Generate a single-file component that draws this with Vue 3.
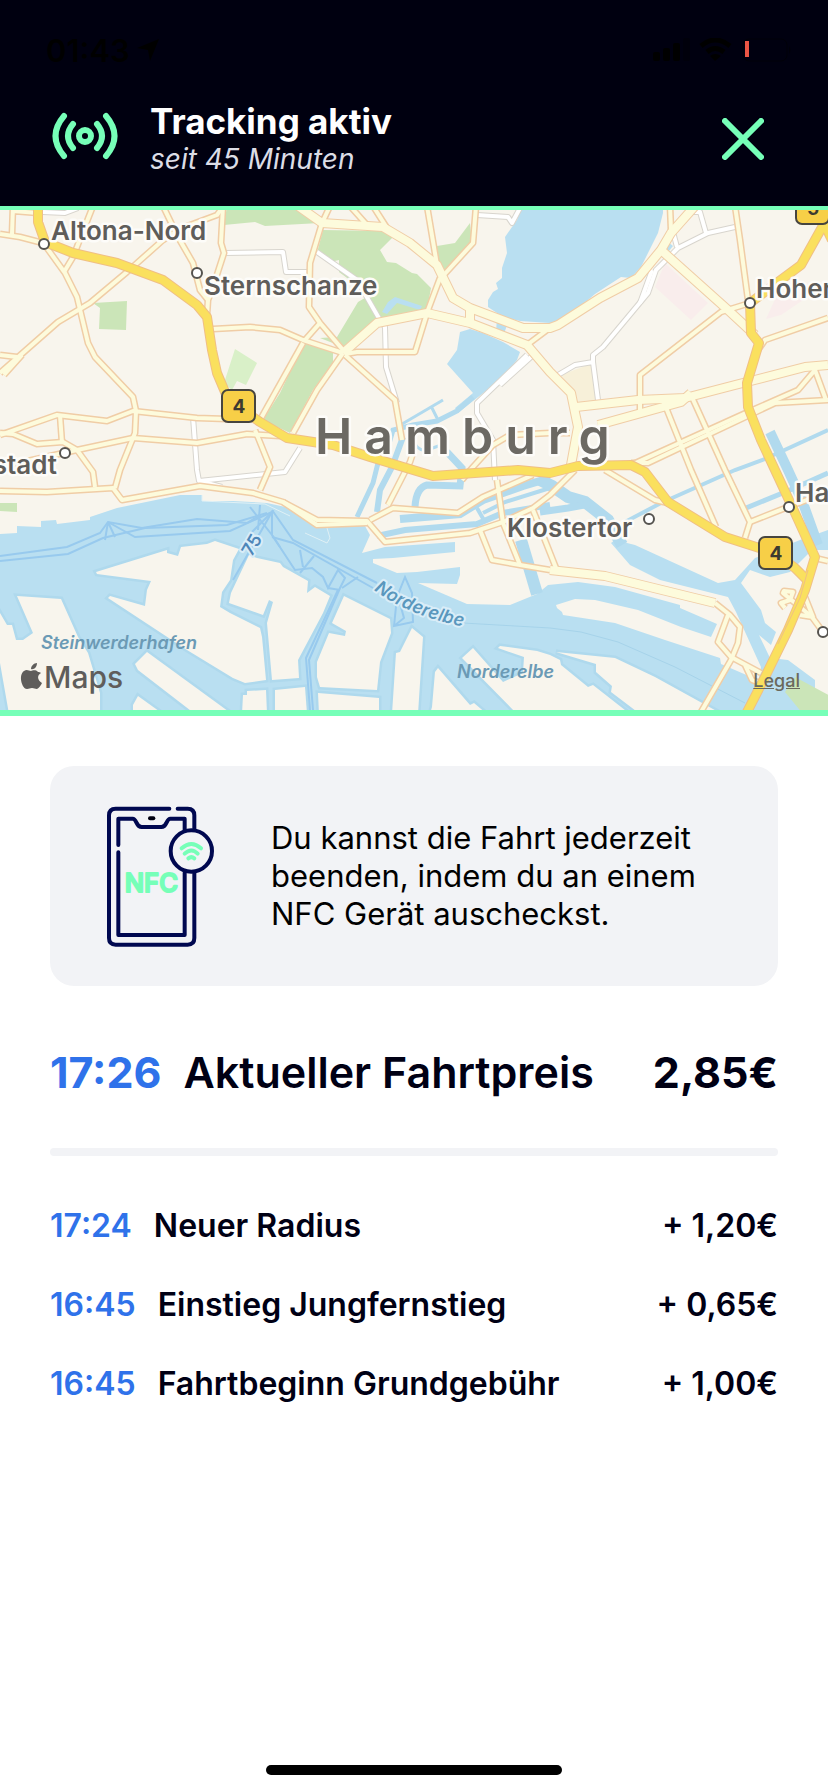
<script setup>
const entries = [
  { time: '17:24', label: 'Neuer Radius', amount: '+ 1,20€' },
  { time: '16:45', label: 'Einstieg Jungfernstieg', amount: '+ 0,65€' },
  { time: '16:45', label: 'Fahrtbeginn Grundgebühr', amount: '+ 1,00€' },
]

const water = [
  'M523 204L517 220 512 227 505 237 507 253 502 268 502 278 496 283 498 289 493 292 488 300 488 307 503 317 520 321 550 323 558 322 588 300 595 294 621 277 631 278 641 267 648 253 658 233 663 213 663 204Z',
  'M460 332L470 329 483 333 503 342 520 352 517 360 500 380 473 401 458 413 455 408 473 393 447 364 457 350Z',
  'M497 318L508 322 504 334 496 332Z',
  'M382 312L388 302 395 297 422 306 420 310 397 303 387 314Z',
  'M665 247L668 242 673 246 669 251Z',
  // Elbe and harbour basin
  'M0 534L17 533 17 526 41 527 41 521 56 520 57 524 90 520 90 517 117 508 180 495 202 495 202 501 233 501 267 503 290 508 313 525 365 526 370 535 362 553 385 547 455 542 455 552 393 558 373 559 373 563 397 573 417 572 460 567 460 575 457 584 418 583 467 604 510 605 537 594 548 585 578 582 615 587 680 605 680 608 717 624 711 637 681 627 638 610 595 600 575 599 556 605 557 608 562 612 563 615 615 623 665 640 720 658 721 664 758 680 785 690 803 712 0 712Z',
  'M611 543L615 540 635 545 718 583 735 580 755 558 800 540 828 530 828 550 812 550 790 572 770 577 750 570 741 583 761 610 765 623 776 632 771 645 759 635 770 658 788 660 815 680 815 688 785 700 758 682 761 667 736 612 728 597 660 580 630 565Z',
]

const canals = [
  { d: 'M473 397L457 411 437 421 413 425 393 430 388 447 378 463 373 483 357 517', w: 5 },
  { d: 'M443 400L397 427 M432 408L438 420', w: 3 },
  { d: 'M403 437L392 467 380 490 377 512', w: 6 },
  { d: 'M412 438Q417 452 427 450L447 443', w: 3 },
  { d: 'M447 452L462 468 460 486 427 485Q416 488 415 507', w: 7 },
  { d: 'M400 519L460 514 483 500 523 486 550 478', w: 8 },
  { d: 'M377 536L405 530 477 524 503 513 550 505', w: 6 },
  { d: 'M483 513L505 502 550 488 M477 508L485 522', w: 4 },
  { d: 'M540 480L552 486 568 497 585 502 608 520 622 545', w: 12 },
  { d: 'M540 512L568 508 590 504', w: 7 },
  { d: 'M521 540L537 594', w: 12 },
  { d: 'M625 522L661 503 735 470 765 459 828 430', w: 4 },
  { d: 'M746 508L790 490 828 473', w: 5 },
  { d: 'M770 432L788 470 803 503 818 545', w: 10 },
]

const land = [
  'M96 572L167 550 167 553 178 556 181 547 207 544 215 541 239 549 233 560 230 580 222 592 220 607 230 613 260 628 262 637 266 680 245 683 233 678 187 650 108 598 110 596 145 606 147 590 151 581 97 574Z',
  'M17 596L61 599 78 637 88 653 100 693 100 714 9 714 0 663 0 613 7 625 12 625 16 640 23 640 33 633Z',
  'M147 652L232 714 195 714 138 670 135 664Z',
  'M138 696L163 714 133 714 133 705Z',
  'M243 695L247 695 247 691 266 690 267 714 242 714Z',
  'M249 555L257 558 280 563 283 567 308 581 307 593 315 587 330 596 323 613 298 660 299 678 272 680 267 623 273 602 269 600 263 615 229 603 231 593Z',
  'M275 690L305 687 307 714 275 714Z',
  'M344 596L390 619 391 633 380 662 377 690 320 687 317 677 317 662 329 633 345 636 346 631 332 623Z',
  'M318 693L379 698 379 714 319 714Z',
  'M412 628L423 637 418 714 392 714 396 653 400 652Z',
  'M438 668L470 705 474 703 487 714 430 714 432 707 435 672Z',
  'M462 658L473 648 503 682 523 673 524 657 498 648 500 646 537 651 550 655 560 660 561 665 588 687 593 685 630 714 517 714Z',
  'M556 652L615 658 655 677 722 714 640 714 611 692 612 686 596 672 596 664Z',
]

const areas = [
  { c: '#cbe5b8', d: 'M93 303L127 301 126 330 99 329 100 308Z M227 206L224 225 255 222 265 226 320 223 298 206Z M323 230L383 231 393 237 380 250 387 262 396 263 412 273 417 274 431 288 427 310 380 318 343 347 320 338 337 337 358 302 370 295 339 272 339 260 330 262 317 253Z M305 340L333 350 333 363 313 390 290 433 263 420 280 393Z M437 246L455 243 470 223 472 243 443 275 437 263Z M0 503L17 503 17 512 0 511Z' },
  { c: '#d9f0c8', d: 'M235 349L257 363 246 385 237 381 232 390 224 383Z' },
  { c: '#f9edec', d: 'M665 263L708 303 691 320 655 287Z M776 297L816 280 818 290 781 315 766 319Z' },
  { c: '#f7f0d9', d: 'M561 375L593 363 596 402 576 403 571 390Z' },
]

const ferries = [
  'M0 556L67 547 100 533 108 522 142 528 197 519 247 523 260 515',
  'M0 561L68 554 103 538 145 528 227 525 267 513',
  'M108 522L135 537 230 531 272 512 233 580 M108 522L105 540 M108 522L115 537',
  'M250 507L272 535 M260 505L258 530 M272 512L252 532 M272 512V535L280 547',
  'M272 510L293 540 377 583 M272 537L293 543 373 588',
  'M272 535L295 570 312 568 323 577 328 588 338 570 345 578 340 588 309 660 313 710',
  'M328 588L340 590 M338 590L306 658 310 710 M342 588L358 577 M300 550L303 567 M314 556L300 573',
  'M405 577L397 597 394 626 413 622 412 593Z M394 626L404 618 399 600',
]

const whiteRoads = [
  'M43 212L65 213 78 208', 'M225 253L283 252 286 272 310 272',
  'M317 252L357 280 380 320 385 327 386 367 397 403',
  'M193 417L197 470 199 481 285 472 300 448 M199 481L222 487',
  'M477 215L508 217 512 223 520 208',
  'M527 355L477 403 477 413 493 440 495 480 M531 357L500 385',
  'M558 375L575 365 593 362 598 400 M593 362V355L603 347 648 293 656 270 678 248 708 233 735 227',
  'M640 303L652 270 M691 212L700 212 706 233 M673 232L677 247',
]

const roads = [
  'M0 234L20 237 43 243', 'M13 206L12 234 M13 211L38 213', 'M93 206L73 257 64 272',
  'M47 248L65 273 77 297 88 343 95 357 133 397 136 411 135 433 120 470 115 488',
  'M0 373L58 322 90 303 127 272 163 240 182 228 217 215 222 208 M4 375L22 355',
  'M0 355L17 357', 'M163 206L178 237 193 263 200 290 208 300',
  'M223 206L221 243 224 253 213 287 208 300 207 315',
  'M213 329L250 327 280 330 303 340 343 353',
  'M0 435L57 415 107 421 133 411 197 418 227 419',
  'M0 433L13 434 37 444 63 442 77 450 93 472 95 487', 'M60 415L62 443',
  'M0 467L77 450 133 438 197 443 247 434 280 436',
  'M0 491L47 492 113 488 122 500 200 486 253 493 283 502 317 520 367 521 385 542 470 533 503 522 533 508 550 495 575 470',
  'M283 502L317 525 367 523', 'M255 430L270 467 260 490',
  'M303 343L260 420', 'M343 353L317 390 293 433',
  'M330 206L322 223 310 263 309 307 320 323 343 350 M320 323L305 340',
  'M350 206L367 225 M373 206L387 228', 'M440 278L428 310 415 352 357 352 345 354',
  'M427 206L437 265', 'M476 206L473 243 442 277', 'M345 355L395 400 402 440',
  'M527 345L547 330', 'M670 206L671 230', 'M735 206L740 240 748 300',
  'M750 303L721 312 640 375 640 410',
  'M828 318L765 340 758 350', 'M631 465L748 412 798 390 815 370 826 400', 'M828 400L775 403 648 463 631 463',
  'M663 400L691 470 716 527', 'M691 395L725 470 750 522 745 538', 'M750 522L788 507 828 492',
  'M605 470L655 500 668 503', 'M570 433L550 433 510 435 493 445 473 467 462 480',
  'M370 520L393 508 458 513 483 497 533 475', 'M413 453L410 462 388 505', 'M497 480L503 523 520 565',
  'M480 530L492 560 520 565 550 570', 'M533 510L556 568',
  'M715 603L730 615 740 627 738 643 731 660 701 712', 'M728 615L718 642 731 657 761 673 M745 665L752 680 765 685',
  'M823 632L812 617 783 593 784 591 793 592 790 600 781 603 785 608 M805 597L813 617 800 615', 'M815 558L828 561',
]

const mainRoads = [
  'M298 206L322 223 383 227 410 243 437 265 453 298 470 308 523 328 550 328 558 325 600 298 638 278 661 250 671 233 695 206',
  'M343 353L377 323 427 313 470 323 527 345 550 372 571 393 578 427 571 465',
  'M470 308V323', 'M661 250L728 310 755 335',
  'M576 407L638 400 685 398 735 385 805 367 828 365', 'M598 425L681 402 691 393',
  'M550 570L605 576 715 603',
]

const highways = [
  'M38 204L38 222 45 242 73 253 117 263 163 280 197 305 207 317 212 350 217 373 225 392 238 407 260 422 287 438 333 445 370 457 433 476 518 470 550 473 578 466 631 465 645 472 668 502 725 537 775 553 795 568 807 580',
  'M825 222L801 265 778 282 750 303 751 333 759 343 747 383 748 407 761 440 795 513 815 557 805 590 788 630 765 677 746 714',
  'M820 215L832 240',
]

const stations = [[44, 244], [197, 273], [65, 453], [750, 303], [789, 507], [649, 519], [823, 632]]
const shields = [
  { x: 222, y: 390, n: '4' },
  { x: 759, y: 537, n: '4' },
  { x: 796, y: 192, n: '5' },
]
const places = [
  { x: 51, y: 240, name: 'Altona-Nord' },
  { x: 204, y: 295, name: 'Sternschanze' },
  { x: 756, y: 298, name: 'Hohen' },
  { x: 795, y: 502, name: 'Ha' },
  { x: 507, y: 537, name: 'Klostertor' },
]
</script>

<template>
  <main class="screen">
    <header class="top">
      <div class="status">
        <span class="clock">01:43</span>
        <svg class="arrow" viewBox="0 0 24 24" width="24" height="24"><path d="M23 1L1 10L12 12L14 23Z" /></svg>
        <svg class="signals" viewBox="0 0 138 24" width="138" height="24">
          <rect x="0" y="14" width="7" height="9" rx="2" />
          <rect x="10" y="10" width="7" height="13" rx="2" />
          <rect x="20" y="5" width="7" height="18" rx="2" />
          <rect x="30" y="0" width="7" height="23" rx="2" opacity=".3" />
          <g fill="none" stroke="#000" stroke-width="5">
            <path d="M48 8Q62 -4 77 8" /><path d="M54 14Q62 7 71 14" />
          </g>
          <path d="M57 18Q62 14 68 18L62 23Z" />
          <rect x="90" y="1" width="44" height="22" rx="6" fill="none" stroke="#000" stroke-width="1" opacity=".5" />
          <path d="M136 8Q139 12 136 16Z" opacity=".5" />
          <rect x="92" y="3" width="4" height="16" fill="#eb5545" />
        </svg>
      </div>
      <div class="bar">
        <svg class="live" viewBox="0 0 66 48" width="66" height="48" fill="none" stroke="#76ffb8" stroke-width="6" stroke-linecap="round">
          <circle cx="33" cy="24" r="6" />
          <path d="M21 12Q11 24 21 36 M45 12Q55 24 45 36 M12 4Q-5 24 12 44 M54 4Q71 24 54 44" />
        </svg>
        <div class="heading">
          <h1>Tracking aktiv</h1>
          <p>seit 45 Minuten</p>
        </div>
        <button class="close" type="button" aria-label="Schließen">
          <svg viewBox="0 0 42 42" width="42" height="42" stroke="#76ffb8" stroke-width="6" stroke-linecap="round"><path d="M3 3L39 39M39 3L3 39" /></svg>
        </button>
      </div>
    </header>

    <section class="map" aria-label="Karte">
      <svg class="canvas" viewBox="0 210 828 500" preserveAspectRatio="xMidYMid slice">
        <rect x="0" y="200" width="828" height="520" fill="#f8f5ed" />
        <path v-for="a in areas" :key="a.c" :d="a.d" :fill="a.c" />
        <path v-for="w in water" :key="w" :d="w" class="water" />
        <path v-for="c in canals" :key="c.d" :d="c.d" :stroke-width="c.w" class="canal" />
        <path v-for="l in land" :key="l" :d="l" class="land" />
        <path d="M785 692L795 677L832 697V714H803Z" fill="#cbe5b8" />
        <path d="M463 623L550 628 581 632 618 642 675 667 745 703" class="lane" />
        <path v-for="f in ferries" :key="f" :d="f" class="ferry" />
        <path d="M305 533L327 543 330 538 327 528 M202 495V501L265 504 290 516" fill="none" stroke="#dff0f5" stroke-width="1" />
        <path v-for="r in whiteRoads" :key="r" :d="r" class="road white-edge" />
        <path v-for="r in whiteRoads" :key="r" :d="r" class="road white-fill" />
        <path v-for="r in roads" :key="r" :d="r" class="road edge" />
        <path v-for="r in mainRoads" :key="r" :d="r" class="road edge main" />
        <path v-for="r in roads" :key="r" :d="r" class="road fill" />
        <path v-for="r in mainRoads" :key="r" :d="r" class="road fill main" />
        <path v-for="r in highways" :key="r" :d="r" class="road hw-edge" />
        <path v-for="r in highways" :key="r" :d="r" class="road hw-fill" />
        <path d="M808 570L800 598L778 644" class="road seam" />

        <circle v-for="s in stations" :key="s[0]" :cx="s[0]" :cy="s[1]" r="5" class="station" />
        <g v-for="s in shields" :key="s.x">
          <rect :x="s.x" :y="s.y" width="33" height="32" rx="6" class="shield" />
          <text :x="s.x + 17" :y="s.y + 23" class="shield-no">{{ s.n }}</text>
        </g>
        <text v-for="p in places" :key="p.name" :x="p.x" :y="p.y" class="place">{{ p.name }}</text>
        <text x="57" y="474" class="place end">stadt</text>
        <text x="315" y="454" class="city">Hamburg</text>
        <text x="41" y="649" class="river">Steinwerderhafen</text>
        <text x="457" y="678" class="river">Norderelbe</text>
        <path id="elbe" d="M374 590Q408 616 470 628" fill="none" />
        <text class="river halo"><textPath href="#elbe">Norderelbe</textPath></text>
        <text x="252" y="551" class="river halo route" transform="rotate(-60 252 545)">75</text>
        <g class="brand">
          <path d="M38 672C35 669 32 671 31 671C29 671 27 669 24 671C18 675 22 689 27 689C29 689 30 688 32 688C34 688 35 689 37 689C39 688 41 685 42 683C37 680 37 675 41 673C40 672 39 672 38 672ZM31 669C31 666 34 663 37 663C37 667 34 670 31 669Z" />
          <text x="44" y="688">Maps</text>
        </g>
      </svg>
      <a class="legal" href="#legal">Legal</a>
    </section>

    <section class="content">
      <div class="hint">
        <svg class="phone" viewBox="80 46 321 423" width="107" height="141" fill="none" stroke="#000850" stroke-width="12" stroke-linecap="round" stroke-linejoin="round">
          <path d="M267 54H106Q86 54 86 74V442Q86 462 106 462H322Q342 462 342 442V246 M292 54H322Q342 54 342 74V118" />
          <path d="M114 163V84H157C170 84 166 109 184 109H243C261 109 257 84 270 84H313V118 M114 185V433H313V246" />
          <circle cx="333" cy="181" r="62" />
          <path d="M209 83H219" stroke="#000010" stroke-width="12" />
          <path d="M304 173Q333 147 362 173 M313 189Q333 170 352 189 M324 203Q333 196 342 203" stroke="#76ffb8" />
          <text x="133" y="303" class="nfc">NFC</text>
        </svg>
        <p>Du kannst die Fahrt jederzeit beenden, indem du an einem NFC Gerät auscheckst.</p>
      </div>

      <div class="row total">
        <time>17:26</time>
        <h2>Aktueller Fahrtpreis</h2>
        <strong>2,85€</strong>
      </div>
      <hr>
      <ul class="entries">
        <li v-for="e in entries" :key="e.label" class="row">
          <time>{{ e.time }}</time>
          <span class="label">{{ e.label }}</span>
          <strong>{{ e.amount }}</strong>
        </li>
      </ul>
    </section>
    <div class="home"></div>
  </main>
</template>

<style>
body { margin: 0; background: #fff; }
</style>

<style scoped>
.screen {
  display: flex;
  flex-direction: column;
  min-height: 100vh;
  background: #fff;
  color: #000014;
  font-family: Inter, "Liberation Sans", sans-serif;
}
h1, h2, p, ul { margin: 0; padding: 0; }
.top { background: #000010; }
.status {
  display: flex;
  align-items: center;
  height: 100px;
  padding: 0 37px 0 46px;
  color: #000;
}
.clock { font-size: 31px; font-weight: 600; }
.arrow { margin-left: 6px; }
.signals { margin-left: auto; }
.bar {
  display: flex;
  align-items: flex-start;
  height: 106px;
  padding: 0 64px 0 52px;
}
.live { margin-top: 12px; }
.heading { flex: 1; margin-left: 32px; }
.heading h1 {
  color: #fff;
  font-size: 35px;
  line-height: 42px;
  font-weight: 700;
}
.heading p {
  color: #dcdde6;
  font-size: 28px;
  line-height: 34px;
  font-style: italic;
}
.close {
  margin-top: 18px;
  padding: 0;
  border: 0;
  background: none;
  line-height: 0;
}
.map {
  position: relative;
  border-top: 4px solid #76ffb8;
  border-bottom: 6px solid #76ffb8;
}
.canvas { display: block; width: 100%; height: 500px; }
.water { fill: #b9dff1; }
.canal { fill: none; stroke: #b1daee; }
.land { fill: #f8f5ed; stroke: #afd9ed; stroke-width: 5; paint-order: stroke; }
.lane { fill: none; stroke: #a6d3ea; stroke-width: 1; }
.ferry { fill: none; stroke: #98caee; stroke-width: 2; }
.road { fill: none; stroke-linejoin: round; }
.white-edge { stroke: #d8d5ce; stroke-width: 6; }
.white-fill { stroke: #fff; stroke-width: 4; }
.edge { stroke: #f0cda6; stroke-width: 7; }
.fill { stroke: #fdfbdc; stroke-width: 4; }
.edge.main { stroke-width: 10; }
.fill.main { stroke-width: 8; }
.hw-edge { stroke: #f0bf85; stroke-width: 10; }
.hw-fill { stroke: #fae05e; stroke-width: 8; }
.seam { stroke: #f0bf85; stroke-width: 1; }
.station { fill: #fff; stroke: #55534f; stroke-width: 2; }
.shield { fill: #f7cf47; stroke: #47453f; stroke-width: 2; }
.shield-no { fill: #3d3a30; font-size: 19px; font-weight: 700; text-anchor: middle; }
.place, .city { fill: #5f5d5a; stroke: #fdfcf9; stroke-width: 5; stroke-linejoin: round; paint-order: stroke; }
.place { font-size: 26px; font-weight: 600; }
.end { text-anchor: end; }
.city { fill: #6c6963; font-size: 50px; font-weight: 600; letter-spacing: 12px; }
.river { fill: #6b9ab5; font-size: 18px; font-weight: 600; font-style: italic; }
.halo { fill: #5a97bd; stroke: #d9edf8; stroke-width: 4; stroke-linejoin: round; paint-order: stroke; }
.route { fill: #4e86b8; text-anchor: middle; font-style: normal; }
.brand { fill: #5f5d5b; font-size: 30px; font-weight: 500; }
.legal {
  position: absolute;
  right: 28px;
  bottom: 18px;
  color: #6a695d;
  font-size: 18px;
  line-height: 22px;
  font-weight: 500;
}
.content { padding: 50px; }
.hint {
  display: flex;
  align-items: center;
  gap: 57px;
  min-height: 220px;
  padding: 0 57px;
  box-sizing: border-box;
  border-radius: 24px;
  background: #f2f3f6;
  color: #000;
}
.phone { flex: none; }
.nfc { fill: #76ffb8; stroke: #76ffb8; stroke-width: 6; font-size: 77px; font-weight: 500; }
.hint p { font-size: 31px; line-height: 38px; }
.row { display: flex; align-items: baseline; gap: 22px; }
.row time { color: #2f72ea; }
.row strong { margin-left: auto; font-weight: inherit; }
.total { margin-top: 58px; font-size: 43px; line-height: 56px; font-weight: 700; }
.total h2 { font-size: inherit; font-weight: 600; }
hr { height: 8px; margin: 48px 0 50px; border: 0; border-radius: 4px; background: #f2f3f6; }
.entries { display: grid; gap: 39px; list-style: none; font-size: 32px; line-height: 40px; font-weight: 600; }
.home {
  width: 296px;
  height: 10px;
  margin: auto auto 17px;
  border-radius: 5px;
  background: #000;
}
</style>
